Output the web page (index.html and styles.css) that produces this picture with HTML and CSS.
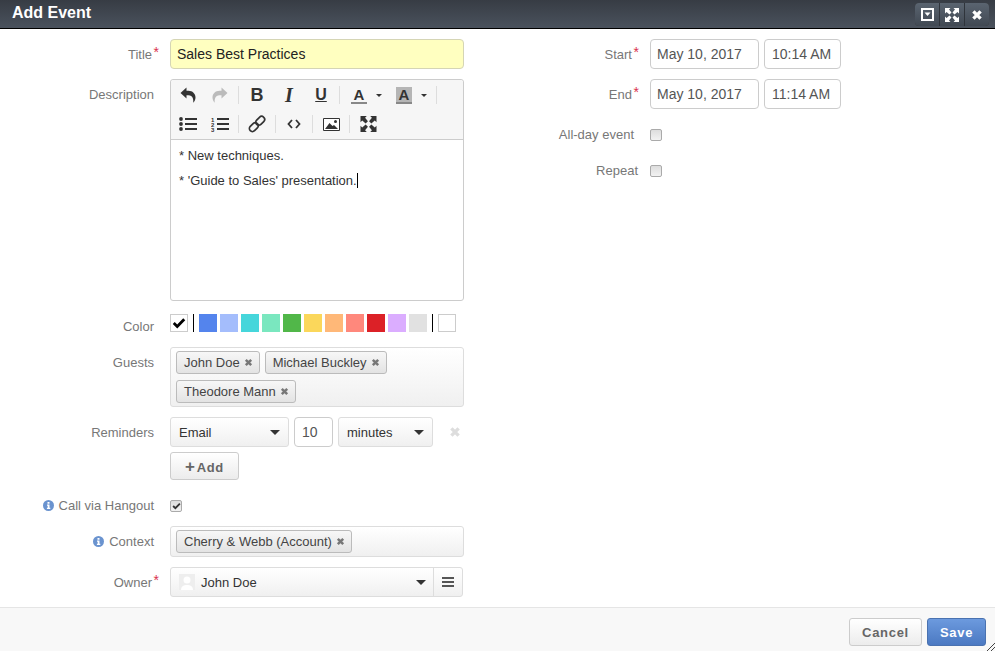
FILE: index.html
```html
<!DOCTYPE html>
<html lang="en">

<head>
    <meta charset="UTF-8">
    <meta name="viewport" content="width=device-width, initial-scale=1.0">
    <title>Add Event</title>

    <link rel="stylesheet" href="styles.css">
</head>

<body>
    <svg class="sprite" xmlns="http://www.w3.org/2000/svg">
        <symbol id="i-x" viewBox="0 0 10 10">
            <path d="M2 2 8 8M8 2 2 8" stroke="currentColor" stroke-width="2.8" fill="none" />
        </symbol>
        <symbol id="i-undo" viewBox="0 0 16 16">
            <path d="M.5 6 6.5.5V3.7H8.500C12.500 3.700 15.500 6.500 15.500 10.500 15.500 12.700 14.500 14.500 13.200 15.800 13.700 12.500 12.800 8.200 8.500 8.200H6.500V11.500Z" fill="currentColor" />
        </symbol>
        <symbol id="i-check" viewBox="0 0 12 10">
            <path d="M1.500 5 4.500 8 10.500 1.800" stroke="currentColor" stroke-width="2.400" fill="none" />
        </symbol>
        <symbol id="i-info" viewBox="0 0 11 11">
            <circle cx="5.500" cy="5.500" r="5.500" fill="#6a93cf" />
            <path d="M4.500 2h2v1.700h-2zM4 4.500h2.500v3.200H7.300V9H3.900V7.700h.8V5.700H4z" fill="#fff" />
        </symbol>
    </svg>

    <header class="head">
        <h1 class="head-title">Add Event</h1>
        <div class="head-btns">
            <span class="head-btn">
                <svg width="13" height="13" viewBox="0 0 13 13">
                    <path d="M1 1h11v11H1z" fill="none" stroke="#fff" stroke-width="2" />
                    <path d="M3.500 4.500h6l-3 3.500z" fill="#fff" />
                </svg>
            </span>
            <span class="head-btn">
                <svg width="14" height="14" viewBox="0 0 14 14">
                    <path d="M0 0h5.500L4 1.500 6.500 4.500 4.500 6.500 1.500 4 0 5.500zM14 0v5.500L12.500 4 9.500 6.500 7.500 4.500 10 1.500 8.500 0zM0 14V8.500L1.500 10 4.500 7.500 6.500 9.500 4 12.500 5.500 14zM14 14H8.500L10 12.500 7.500 9.500 9.500 7.500 12.500 10 14 8.500z" fill="#fff" />
                </svg>
            </span>
            <span class="head-btn"><svg class="head-x" width="12" height="12"><use href="#i-x" /></svg></span>
        </div>
    </header>

    <main class="form">
        <div class="col-left">
            <div class="row">
                <label class="lbl">Title<b class="req">*</b></label>
                <div class="field field-title">Sales Best Practices</div>
            </div>

            <div class="row row-desc">
                <label class="lbl">Description</label>
                <div class="editor">
                    <div class="toolbar">
                        <span class="tb"><svg class="ico-undo" width="16" height="16"><use href="#i-undo" /></svg></span>
                        <span class="tb tb-off"><svg class="ico-redo" width="16" height="16"><use href="#i-undo" /></svg></span>
                        <i class="sep"></i>
                        <span class="tb tb-b">B</span>
                        <span class="tb tb-i">I</span>
                        <span class="tb tb-u">U</span>
                        <i class="sep"></i>
                        <span class="tb tb-color"><span class="letter">A</span><i class="caret caret-sm"></i></span>
                        <span class="tb tb-color tb-color2"><span class="letter letter-bg">A</span><i class="caret caret-sm"></i></span>
                        <i class="sep"></i>
                        <span class="tb">
                            <svg width="18" height="16" viewBox="0 0 18 16">
                                <circle cx="2" cy="3" r="1.900" fill="#333" />
                                <circle cx="2" cy="8" r="1.900" fill="#333" />
                                <circle cx="2" cy="13" r="1.900" fill="#333" />
                                <path d="M6 3h12M6 8h12M6 13h12" stroke="#333" stroke-width="2" />
                            </svg>
                        </span>
                        <span class="tb">
                            <svg width="18" height="16" viewBox="0 0 18 16">
                                <text x="0" y="5.500" class="ol-num">1</text>
                                <text x="0" y="10.500" class="ol-num">2</text>
                                <text x="0" y="15.500" class="ol-num">3</text>
                                <path d="M6 3h12M6 8h12M6 13h12" stroke="#333" stroke-width="2" />
                            </svg>
                        </span>
                        <i class="sep"></i>
                        <span class="tb">
                            <svg width="18" height="18" viewBox="0 0 18 18">
                                <g fill="none" stroke="#333" stroke-width="1.700" transform="rotate(-45 9 9)">
                                    <rect x="-.5" y="6" width="10" height="6" rx="3" />
                                    <rect x="8.500" y="6" width="10" height="6" rx="3" />
                                </g>
                            </svg>
                        </span>
                        <i class="sep"></i>
                        <span class="tb">
                            <svg width="14" height="10" viewBox="0 0 14 10">
                                <path d="M5 1 1.500 5 5 9M9 1l3.500 4L9 9" fill="none" stroke="#333" stroke-width="1.800" />
                            </svg>
                        </span>
                        <i class="sep"></i>
                        <span class="tb">
                            <svg width="17" height="13" viewBox="0 0 17 13">
                                <path d="M.5.500h16v12H.5z" fill="#fff" stroke="#333" />
                                <path d="M2 11 6.500 5 9.500 8 11 7 15 11z" fill="#333" />
                                <circle cx="12.500" cy="3.500" r="1.500" fill="#333" />
                            </svg>
                        </span>
                        <i class="sep"></i>
                        <span class="tb">
                            <svg width="17" height="16" viewBox="0 0 14 14">
                                <path d="M0 0h5.500L4 1.500 6.500 4.500 4.500 6.500 1.500 4 0 5.500zM14 0v5.500L12.500 4 9.500 6.500 7.500 4.500 10 1.500 8.500 0zM0 14V8.500L1.500 10 4.500 7.500 6.500 9.500 4 12.500 5.500 14zM14 14H8.500L10 12.500 7.500 9.500 9.500 7.500 12.500 10 14 8.500z" fill="#333" />
                            </svg>
                        </span>
                    </div>
                    <div class="editor-body">
                        <p>* New techniques.</p>
                        <p>* 'Guide to Sales' presentation.<i class="cursor"></i></p>
                    </div>
                </div>
            </div>

            <div class="row row-color">
                <label class="lbl">Color</label>
                <div class="colors">
                    <span class="swatch swatch-white"><svg width="14" height="12"><use href="#i-check" /></svg></span>
                    <i class="bar"></i>
                    <span class="swatch" style="background:#5484ed"></span>
                    <span class="swatch" style="background:#a4bdfc"></span>
                    <span class="swatch" style="background:#46d6db"></span>
                    <span class="swatch" style="background:#7ae7bf"></span>
                    <span class="swatch" style="background:#51b749"></span>
                    <span class="swatch" style="background:#fbd75b"></span>
                    <span class="swatch" style="background:#ffb878"></span>
                    <span class="swatch" style="background:#ff887c"></span>
                    <span class="swatch" style="background:#dc2127"></span>
                    <span class="swatch" style="background:#dbadff"></span>
                    <span class="swatch" style="background:#e1e1e1"></span>
                    <i class="bar"></i>
                    <span class="swatch swatch-white"></span>
                </div>
            </div>

            <div class="row">
                <label class="lbl">Guests</label>
                <div class="chips">
                    <span class="chip">John Doe<svg class="chip-x" width="9" height="9"><use href="#i-x" /></svg></span>
                    <span class="chip">Michael Buckley<svg class="chip-x" width="9" height="9"><use href="#i-x" /></svg></span>
                    <span class="chip">Theodore Mann<svg class="chip-x" width="9" height="9"><use href="#i-x" /></svg></span>
                </div>
            </div>

            <div class="row row-rem">
                <label class="lbl">Reminders</label>
                <div class="rem">
                    <div class="rem-line">
                        <div class="select select-type">Email<i class="caret"></i></div>
                        <div class="field field-num">10</div>
                        <div class="select select-unit">minutes<i class="caret"></i></div>
                        <svg class="rem-x" width="12" height="12"><use href="#i-x" /></svg>
                    </div>
                    <button class="btn btn-add"><span class="plus">+</span>Add</button>
                </div>
            </div>

            <div class="row row-check">
                <label class="lbl"><svg class="info" width="11" height="11"><use href="#i-info" /></svg>Call via Hangout</label>
                <div class="check-wrap"><span class="check"><svg width="9" height="8"><use href="#i-check" /></svg></span></div>
            </div>

            <div class="row">
                <label class="lbl"><svg class="info" width="11" height="11"><use href="#i-info" /></svg>Context</label>
                <div class="chips chips-context">
                    <span class="chip">Cherry &amp; Webb (Account)<svg class="chip-x" width="9" height="9"><use href="#i-x" /></svg></span>
                </div>
            </div>

            <div class="row">
                <label class="lbl">Owner<b class="req">*</b></label>
                <div class="owner">
                    <div class="owner-main">
                        <span class="avatar">
                            <svg width="16" height="16" viewBox="0 0 16 16">
                                <circle cx="8" cy="6" r="3.500" fill="#fff" />
                                <path d="M2 16c0-4 3-5 6-5s6 1 6 5z" fill="#fff" />
                            </svg>
                        </span>
                        John Doe<i class="caret"></i>
                    </div>
                    <div class="owner-menu"><i class="burger"></i></div>
                </div>
            </div>
        </div>

        <div class="col-right">
            <div class="row row-r">
                <label class="lbl">Start<b class="req">*</b></label>
                <div class="dates">
                    <div class="field field-date">May 10, 2017</div>
                    <div class="field field-time">10:14 AM</div>
                </div>
            </div>
            <div class="row row-r row-end">
                <label class="lbl">End<b class="req">*</b></label>
                <div class="dates">
                    <div class="field field-date">May 10, 2017</div>
                    <div class="field field-time">11:14 AM</div>
                </div>
            </div>
            <div class="row row-r row-check row-allday">
                <label class="lbl">All-day event</label>
                <div class="check-wrap"><span class="check"></span></div>
            </div>
            <div class="row row-r row-check">
                <label class="lbl lbl-repeat">Repeat</label>
                <div class="check-wrap"><span class="check"></span></div>
            </div>
        </div>
    </main>

    <footer class="foot">
        <button class="btn btn-cancel">Cancel</button>
        <button class="btn btn-save">Save</button>
        <svg class="grip" width="10" height="8" viewBox="0 0 10 8">
            <path d="M2 8 10 0M6 8l4-4" stroke="#444" fill="none" />
        </svg>
    </footer>
</body>

</html>
```

FILE: styles.css
```css
* {
    box-sizing: border-box;
}

html,
body {
    height: 100%;
}

body {
    margin: 0;
    display: flex;
    flex-direction: column;
    overflow: hidden;
    background: #fff;
    font-family: "Liberation Sans", Arial, sans-serif;
    font-size: 13px;
    color: #333;
}

.sprite {
    display: none;
}

/* header */
.head {
    flex: none;
    height: 29px;
    padding: 3px 6px 0 12px;
    display: flex;
    justify-content: space-between;
    background: linear-gradient(#373c44, #4a525d);
    border-bottom: 1px solid #000;
}

.head-title {
    margin: 0;
    font-size: 16px;
    line-height: 19px;
    font-weight: bold;
    color: #fff;
}

.head-btns {
    display: flex;
    height: 23px;
    border-radius: 4px;
    overflow: hidden;
    background: #333;
}

.head-btn {
    width: 25px;
    display: flex;
    align-items: center;
    justify-content: center;
    background: linear-gradient(#5a6470, #414953);
    border-left: 1px solid #2f343b;
}

.head-btn:first-child {
    width: 24px;
    border-left: 0;
}

.head-x {
    color: #fff;
}

/* form layout */
.form {
    flex: 1;
    display: flex;
    padding-top: 10px;
    gap: 36px;
}

.col-left {
    width: 464px;
}

.row {
    display: grid;
    grid-template-columns: 154px 294px;
    column-gap: 16px;
    margin-bottom: 10px;
}

.row-r {
    grid-template-columns: 134px 200px;
}

.row-desc {
    margin-bottom: 13px;
}

.row-color {
    height: 24px;
    margin-bottom: 9px;
}

.row-rem {
    margin-bottom: 11px;
}

.row-check {
    margin-bottom: 5px;
}

.row-allday {
    margin-bottom: 6px;
}

.row-end {
    margin-bottom: 11px;
}

.lbl {
    height: 30px;
    padding-top: 1px;
    line-height: 30px;
    text-align: right;
    color: #777;
    white-space: nowrap;
}

.row-color .lbl {
    height: 24px;
    line-height: 24px;
}

.row-check .lbl {
    padding-top: 0;
}

.lbl-repeat {
    margin-right: -4px;
}

.req {
    display: inline-block;
    width: 7px;
    margin-right: -5px;
    font-size: 14px;
    font-weight: normal;
    line-height: 1;
    text-align: right;
    color: #d9304f;
    position: relative;
    top: -2px;
}

.info {
    margin-right: 5px;
    vertical-align: -1px;
}

/* inputs */
.field {
    height: 30px;
    padding: 0 6px;
    line-height: 28px;
    font-size: 14px;
    border: 1px solid #ccc;
    border-radius: 4px;
    background: #fff;
    color: #555;
    white-space: nowrap;
}

.field-title {
    background: #ffffc0;
    color: #222;
    border-color: #d5d5b5;
}

.dates {
    display: flex;
    gap: 5px;
}

.field-date {
    width: 109px;
}

.field-time {
    width: 77px;
    padding-left: 7px;
}

.field-num {
    width: 39px;
    padding: 0 7px;
}

/* rich text editor */
.editor {
    height: 222px;
    border: 1px solid #ccc;
    border-radius: 3px;
}

.toolbar {
    height: 60px;
    padding: 3px 0 0 1px;
    display: flex;
    flex-wrap: wrap;
    align-content: flex-start;
    background: #f6f6f6;
    border-bottom: 1px solid #ccc;
    border-radius: 3px 3px 0 0;
}

.tb {
    width: 32px;
    height: 24px;
    margin-bottom: 5px;
    display: flex;
    align-items: center;
    justify-content: center;
    color: #333;
    font-size: 18px;
    line-height: 1;
}

.tb-b {
    font-weight: bold;
}

.tb-i {
    font-size: 20px;
    font-style: italic;
    font-family: "Liberation Serif", serif;
    font-weight: bold;
}

.tb-u {
    font-size: 16px;
    font-weight: bold;
    text-decoration: underline;
}

.tb-off {
    color: #bbb;
}

.ico-redo {
    transform: scaleX(-1);
}

.tb-color {
    width: 46px;
    justify-content: flex-start;
    padding-left: 9px;
}

.tb-color2 {
    padding-left: 8px;
}

.letter {
    width: 16px;
    height: 17px;
    font-size: 15px;
    font-weight: bold;
    text-align: center;
    line-height: 15px;
    border-bottom: 2px solid #888;
}

.letter-bg {
    background: #b5b5b5;
}

.sep {
    width: 1px;
    height: 18px;
    margin: 3px 2px 0;
    background: #ddd;
}

.ol-num {
    font-size: 6px;
    font-weight: bold;
    fill: #333;
}

.caret {
    width: 0;
    height: 0;
    border-style: solid;
    border-width: 5px 5px 0;
    border-color: #333 transparent transparent;
}

.caret-sm {
    margin-left: 9px;
    border-width: 3.500px 3.500px 0;
}

.editor-body {
    padding: 8px 8px 0;
    font-size: 13px;
    color: #333;
}

.editor-body p {
    margin: 0 0 9px;
    line-height: 16px;
}

.cursor {
    display: inline-block;
    width: 1px;
    height: 15px;
    background: #000;
    vertical-align: -3px;
}

/* colour picker */
.colors {
    display: flex;
    gap: 3px;
    height: 18px;
}

.swatch {
    width: 18px;
    height: 18px;
    display: flex;
    align-items: center;
    justify-content: center;
    color: #000;
}

.swatch-white {
    background: #fff;
    border: 1px solid #ccc;
}

.bar {
    width: 1px;
    height: 18px;
    margin: 0 2px;
    background: #000;
}

/* guests and context */
.chips {
    height: 60px;
    padding: 3px 5px;
    display: flex;
    flex-wrap: wrap;
    align-content: flex-start;
    gap: 6px 5px;
    border: 1px solid #ddd;
    border-radius: 3px;
    background: linear-gradient(#fff, #f0f0f0);
}

.chips-context {
    height: 31px;
}

.chip {
    height: 23px;
    padding: 0 6px 0 7px;
    line-height: 21px;
    color: #444;
    white-space: nowrap;
    border: 1px solid #bbb;
    border-radius: 3px;
    background: linear-gradient(#f7f7f7, #e3e3e3);
}

.chip-x {
    margin-left: 4px;
    color: #777;
}

/* reminders */
.rem-line {
    display: flex;
    align-items: center;
    gap: 5px;
    margin-bottom: 5px;
}

.select {
    height: 30px;
    padding: 0 8px;
    display: flex;
    align-items: center;
    justify-content: space-between;
    color: #333;
    border: 1px solid #ddd;
    border-radius: 3px;
    background: linear-gradient(#fff, #f0f0f0);
}

.select-type {
    width: 119px;
}

.select-unit {
    width: 95px;
    margin-right: 11px;
}

.rem-x {
    color: #ddd;
}

.btn {
    height: 28px;
    padding: 0;
    font-family: inherit;
    font-size: 13px;
    font-weight: bold;
    letter-spacing: .7px;
    border: 1px solid #ccc;
    border-radius: 3px;
    color: #666;
    background: linear-gradient(#fff, #ececec);
}

.btn-add {
    width: 69px;
    display: block;
}

.plus {
    font-size: 17px;
    line-height: 1;
    margin-right: 1px;
}

/* checkboxes */
.check-wrap {
    padding-top: 9px;
}

.check {
    width: 12px;
    height: 12px;
    display: flex;
    align-items: center;
    justify-content: center;
    color: #333;
    border: 1px solid #aaa;
    border-radius: 2px;
    background: linear-gradient(#ddd, #f2f2f2);
}

/* owner */
.owner {
    width: 293px;
    height: 30px;
    display: flex;
    border: 1px solid #ddd;
    border-radius: 3px;
    background: linear-gradient(#fff, #f0f0f0);
}

.owner-main {
    flex: 1;
    padding: 0 7px 0 8px;
    display: flex;
    align-items: center;
    color: #333;
}

.owner-main .caret {
    margin-left: auto;
}

.avatar {
    width: 16px;
    height: 16px;
    margin-right: 6px;
    background: #eee;
    overflow: hidden;
}

.owner-menu {
    width: 29px;
    display: flex;
    align-items: center;
    justify-content: center;
    border-left: 1px solid #ddd;
}

.burger {
    width: 12px;
    height: 10px;
    border-top: 2px solid #555;
    border-bottom: 2px solid #555;
    position: relative;
}

.burger::after {
    content: "";
    position: absolute;
    left: 0;
    right: 0;
    top: 2px;
    height: 2px;
    background: #555;
}

/* footer */
.foot {
    flex: none;
    height: 44px;
    padding: 10px 9px 0 0;
    display: flex;
    justify-content: flex-end;
    gap: 5px;
    position: relative;
    background: #f8f8f8;
    border-top: 1px solid #e5e5e5;
}

.btn-cancel {
    width: 73px;
}

.btn-save {
    width: 59px;
    color: #fff;
    border-color: #4a72b0;
    background: linear-gradient(#6c9ade, #4b79c2);
}

.grip {
    position: absolute;
    right: 0;
    bottom: 0;
}
```
